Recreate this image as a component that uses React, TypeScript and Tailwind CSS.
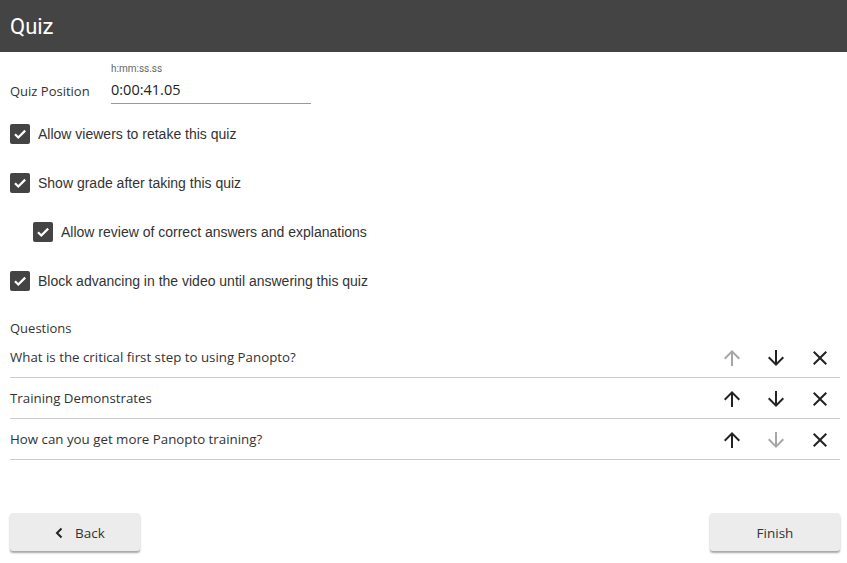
const questions = [
  { text: "What is the critical first step to using Panopto?", up: false, down: true },
  { text: "Training Demonstrates", up: true, down: true },
  { text: "How can you get more Panopto training?", up: true, down: false },
];

const options = [
  { label: "Allow viewers to retake this quiz", indent: false },
  { label: "Show grade after taking this quiz", indent: false },
  { label: "Allow review of correct answers and explanations", indent: true },
  { label: "Block advancing in the video until answering this quiz", indent: false },
];

function ArrowUp({ active }: { active: boolean }) {
  return (
    <svg width="24" height="24" viewBox="0 0 24 24" className={active ? "fill-[#222]" : "fill-[#a6a6a6]"}>
      <path d="M4 12l1.41 1.41L11 7.83V20h2V7.83l5.58 5.59L20 12l-8-8-8 8z" />
    </svg>
  );
}

function ArrowDown({ active }: { active: boolean }) {
  return (
    <svg width="24" height="24" viewBox="0 0 24 24" className={active ? "fill-[#222]" : "fill-[#a6a6a6]"}>
      <path d="M20 12l-1.41-1.41L13 16.17V4h-2v12.17l-5.58-5.59L4 12l8 8 8-8z" />
    </svg>
  );
}

function CloseIcon() {
  return (
    <svg width="24" height="24" viewBox="0 0 24 24" className="fill-[#222]">
      <path d="M19 6.41L17.59 5 12 10.59 6.41 5 5 6.41 10.59 12 5 17.59 6.41 19 12 13.41 17.59 19 19 17.59 13.41 12z" />
    </svg>
  );
}

function Check() {
  return (
    <div className="flex h-5 w-5 shrink-0 items-center justify-center rounded-[2px] bg-[#444]">
      <svg width="14" height="14" viewBox="0 0 14 14" fill="none" className="stroke-white">
        <path d="M2 7.2l3.3 3.3L12.2 3.6" strokeWidth="2.2" />
      </svg>
    </div>
  );
}

export default function App() {
  return (
    <div className="h-[563px] w-[847px] bg-white font-['Open_Sans',sans-serif] text-[#333]">
      <div className="flex h-[52px] items-center bg-[#444] px-[10px]">
        <h1 className="font-['Roboto',sans-serif] text-[22px] text-white">Quiz</h1>
      </div>

      <div className="pl-[10px] pr-[7px]">
        <div className="flex items-end pt-[10px]">
          <span className="w-[101px] pb-[3px] text-[13px] text-[#333]">Quiz Position</span>
          <div className="flex flex-col">
            <span className="font-['Roboto',sans-serif] text-[10px] leading-[14px] text-[#666]">h:mm:ss.ss</span>
            <div className="mt-[4px] w-[200px] border-b border-[#999] pb-[3px] text-[14.5px] leading-[20px] text-[#222]">
              0:00:41.05
            </div>
          </div>
        </div>

        <div className="mt-[20px] flex flex-col gap-[29px]">
          {options.map((o) => (
            <div key={o.label} className={`flex items-center gap-[8px] ${o.indent ? "pl-[23px]" : ""}`}>
              <Check />
              <span className="font-['Liberation_Sans',sans-serif] text-[14px] leading-[20px] text-[#333]">{o.label}</span>
            </div>
          ))}
        </div>

        <div className="mt-[28px] text-[13px] leading-[18px] text-[#333]">Questions</div>
        <div>
          {questions.map((q) => (
            <div key={q.text} className="flex h-[41px] items-center border-b border-[#ccc] pt-[1px]">
              <span className="flex-1 text-[13.3px] text-[#333]">{q.text}</span>
              <div className="mr-[8px] flex gap-[20px]">
                <ArrowUp active={q.up} />
                <ArrowDown active={q.down} />
                <CloseIcon />
              </div>
            </div>
          ))}
        </div>

        <div className="mt-[53px] flex justify-between">
          <button className="flex h-[38px] w-[130px] items-center gap-[11px] rounded-[3px] bg-[#ececec] pl-[44px] pt-[2px] text-[13.5px] text-[#333] shadow-[0_2px_2px_rgba(0,0,0,0.35)]">
            <svg width="10" height="12" viewBox="0 0 10 12" className="stroke-[#222]" fill="none">
              <path d="M7.5 1.5L3 6 7.5 10.5" strokeWidth="2" />
            </svg>
            Back
          </button>
          <button className="h-[38px] w-[130px] rounded-[3px] bg-[#ececec] pt-[2px] text-[13.5px] text-[#333] shadow-[0_2px_2px_rgba(0,0,0,0.35)]">
            Finish
          </button>
        </div>
      </div>
    </div>
  );
}
